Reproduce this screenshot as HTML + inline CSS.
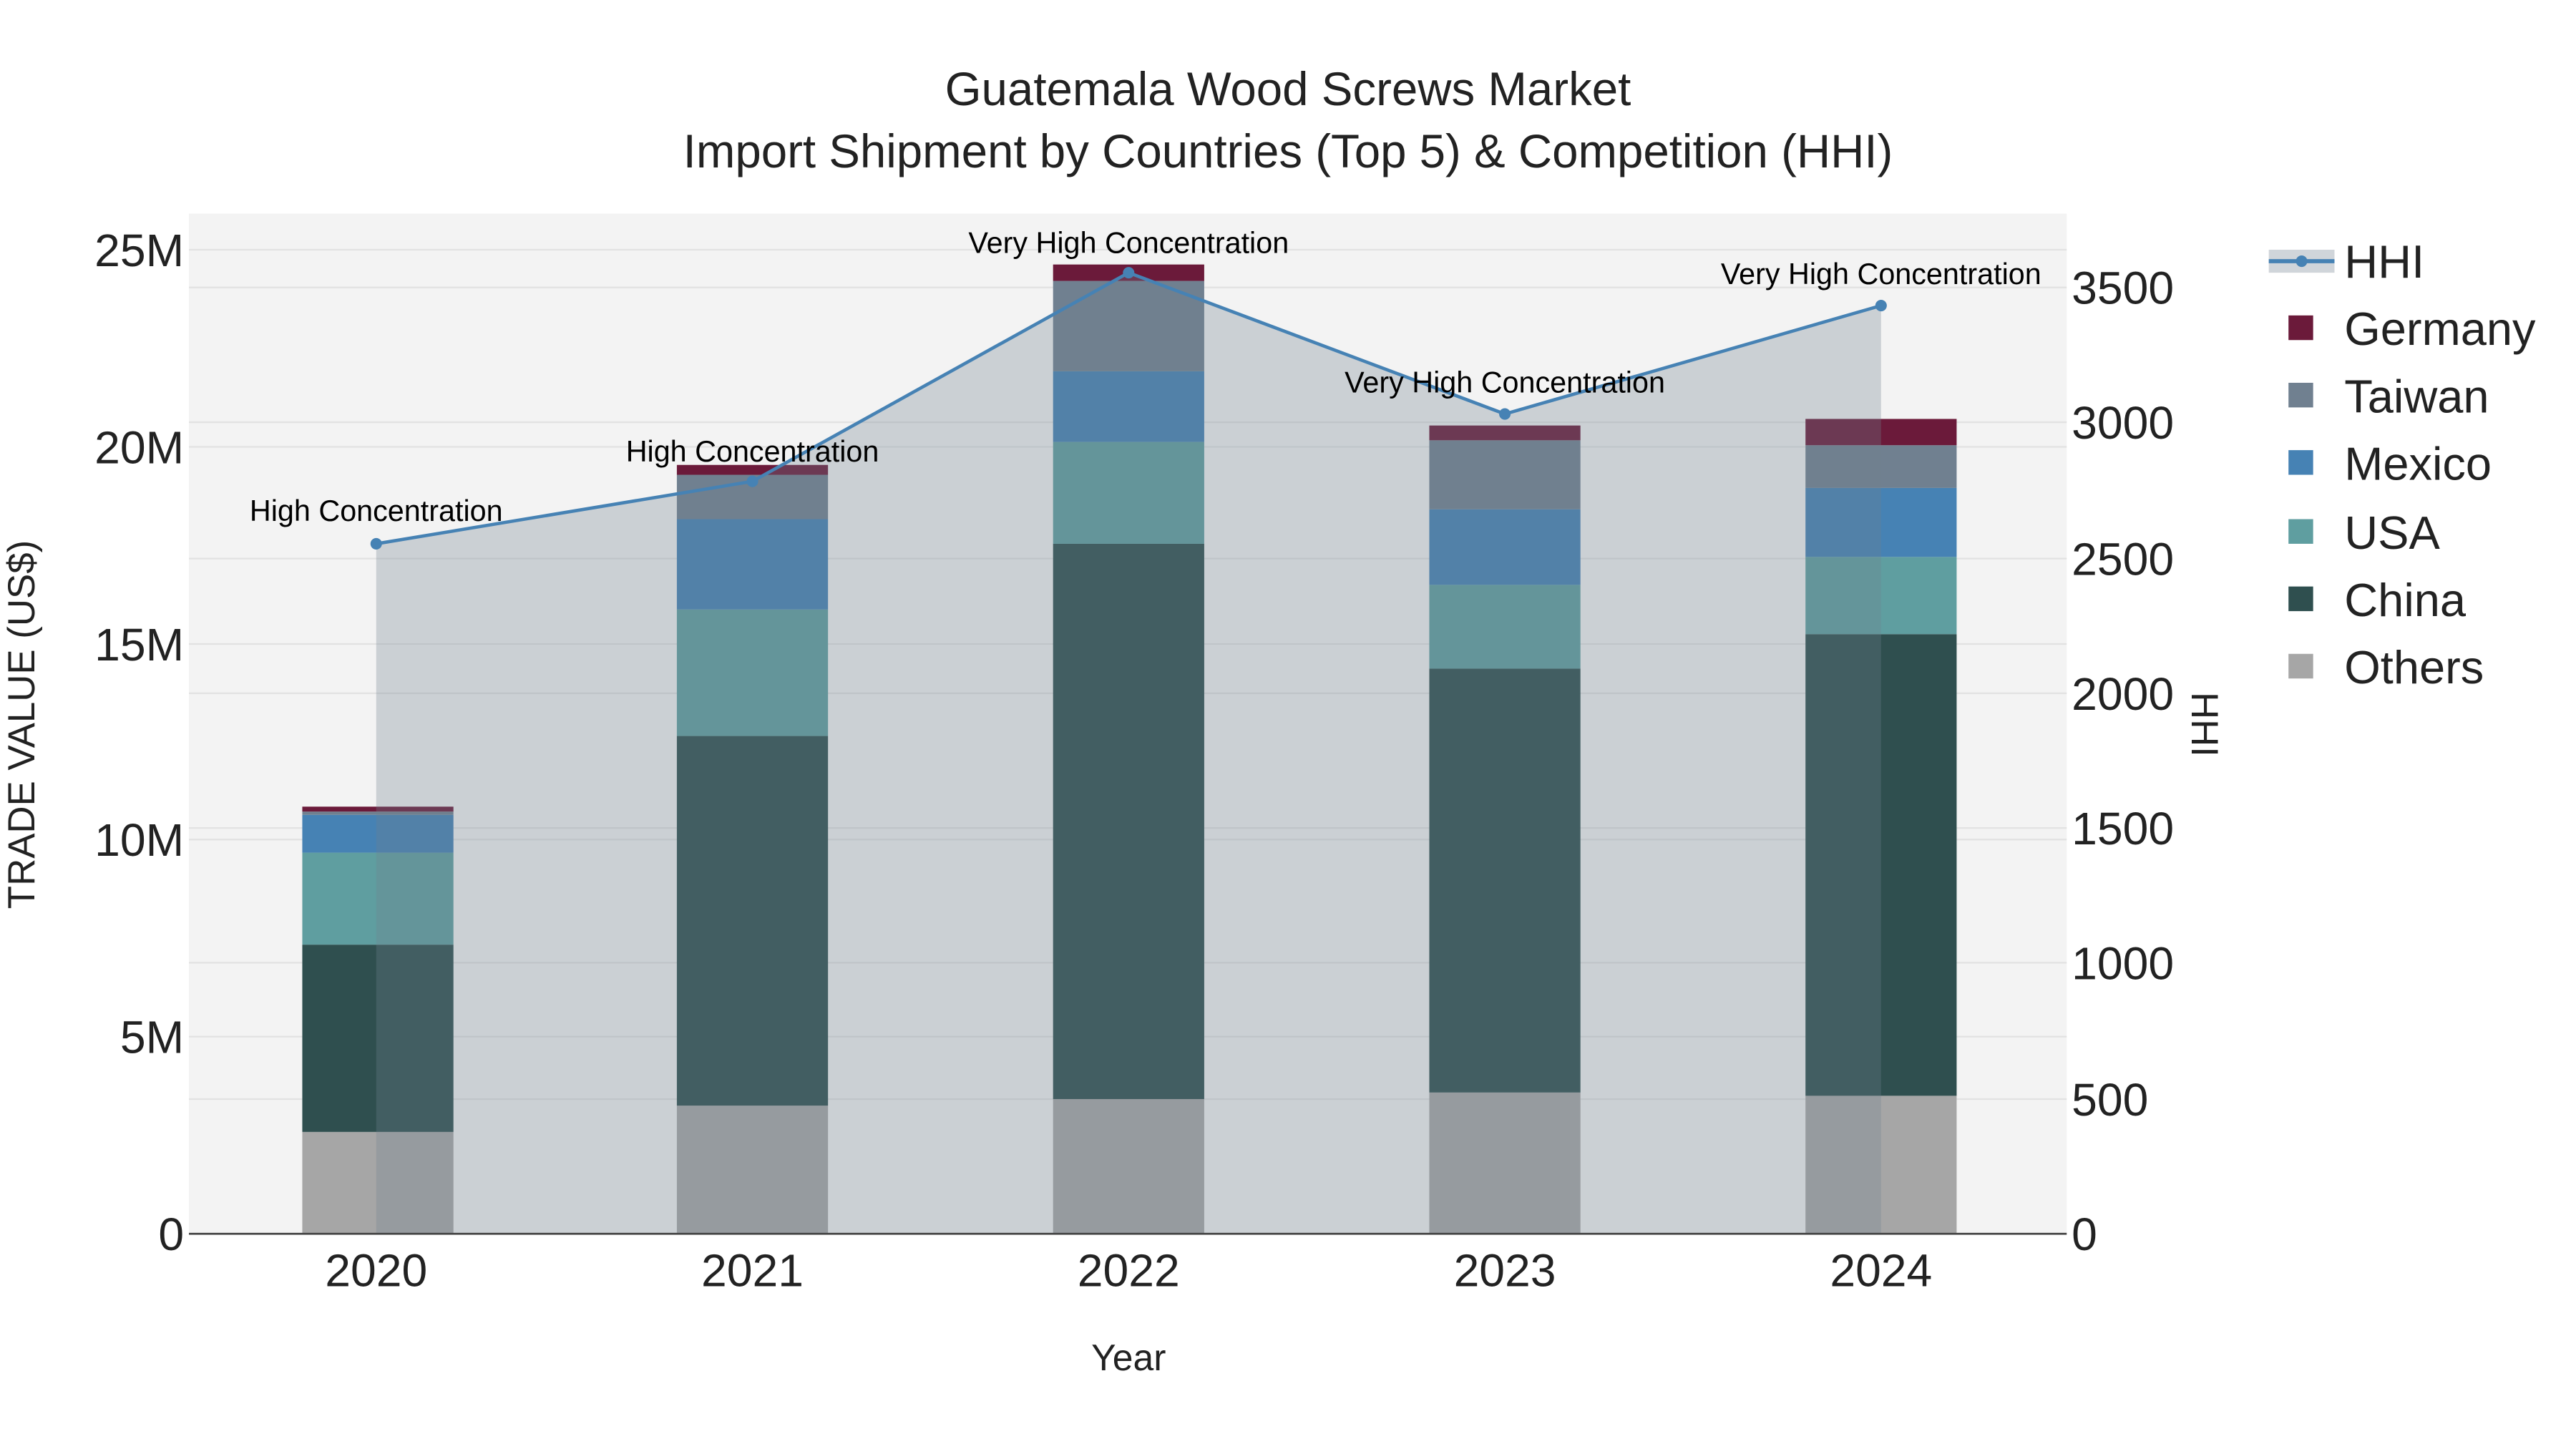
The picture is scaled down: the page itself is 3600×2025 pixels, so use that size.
<!DOCTYPE html>
<html><head><meta charset="utf-8"><style>
html,body{margin:0;padding:0;background:#fff;}
svg{display:block;font-family:"Liberation Sans",Arial,sans-serif;}
</style></head><body>
<svg width="3600" height="2025" viewBox="0 0 1568 882" preserveAspectRatio="none" xmlns="http://www.w3.org/2000/svg">
<rect x="0" y="0" width="1568" height="882" fill="#fff"/>
<rect x="115" y="130" width="1143" height="621" fill="#f3f3f3"/>
<g stroke="#e2e2e2" stroke-width="1">
<line x1="115" x2="1258" y1="631" y2="631"/><line x1="115" x2="1258" y1="511" y2="511"/>
<line x1="115" x2="1258" y1="392" y2="392"/><line x1="115" x2="1258" y1="272" y2="272"/>
<line x1="115" x2="1258" y1="152" y2="152"/>
<line x1="115" x2="1258" y1="669" y2="669"/><line x1="115" x2="1258" y1="586" y2="586"/>
<line x1="115" x2="1258" y1="504" y2="504"/><line x1="115" x2="1258" y1="422" y2="422"/>
<line x1="115" x2="1258" y1="340" y2="340"/><line x1="115" x2="1258" y1="257" y2="257"/>
<line x1="115" x2="1258" y1="175" y2="175"/>
</g>
<g>
<rect x="184" y="689" width="92" height="62" fill="#a6a6a6"/>
<rect x="184" y="575" width="92" height="114" fill="#2f4f4f"/>
<rect x="184" y="519" width="92" height="56" fill="#5f9ea0"/>
<rect x="184" y="496" width="92" height="23" fill="#4682b4"/>
<rect x="184" y="494" width="92" height="2" fill="#708090"/>
<rect x="184" y="491" width="92" height="3" fill="#6b1a3a"/>
<rect x="412" y="673" width="92" height="78" fill="#a6a6a6"/>
<rect x="412" y="448" width="92" height="225" fill="#2f4f4f"/>
<rect x="412" y="371" width="92" height="77" fill="#5f9ea0"/>
<rect x="412" y="316" width="92" height="55" fill="#4682b4"/>
<rect x="412" y="289" width="92" height="27" fill="#708090"/>
<rect x="412" y="283" width="92" height="6" fill="#6b1a3a"/>
<rect x="641" y="669" width="92" height="82" fill="#a6a6a6"/>
<rect x="641" y="331" width="92" height="338" fill="#2f4f4f"/>
<rect x="641" y="269" width="92" height="62" fill="#5f9ea0"/>
<rect x="641" y="226" width="92" height="43" fill="#4682b4"/>
<rect x="641" y="171" width="92" height="55" fill="#708090"/>
<rect x="641" y="161" width="92" height="10" fill="#6b1a3a"/>
<rect x="870" y="665" width="92" height="86" fill="#a6a6a6"/>
<rect x="870" y="407" width="92" height="258" fill="#2f4f4f"/>
<rect x="870" y="356" width="92" height="51" fill="#5f9ea0"/>
<rect x="870" y="310" width="92" height="46" fill="#4682b4"/>
<rect x="870" y="268" width="92" height="42" fill="#708090"/>
<rect x="870" y="259" width="92" height="9" fill="#6b1a3a"/>
<rect x="1099" y="667" width="92" height="84" fill="#a6a6a6"/>
<rect x="1099" y="386" width="92" height="281" fill="#2f4f4f"/>
<rect x="1099" y="339" width="92" height="47" fill="#5f9ea0"/>
<rect x="1099" y="297" width="92" height="42" fill="#4682b4"/>
<rect x="1099" y="271" width="92" height="26" fill="#708090"/>
<rect x="1099" y="255" width="92" height="16" fill="#6b1a3a"/>
</g>
<polygon points="229,751 229,331 458,293 687,166 916,252 1145,186 1145,751" fill="rgba(112,128,144,0.3)"/>
<polyline points="229,331 458,293 687,166 916,252 1145,186" fill="none" stroke="#4682b4" stroke-width="2"/>
<g fill="#4682b4"><circle cx="229" cy="331" r="3.5"/><circle cx="458" cy="293" r="3.5"/><circle cx="687" cy="166" r="3.5"/><circle cx="916" cy="252" r="3.5"/><circle cx="1145" cy="186" r="3.5"/></g>
<line x1="115" x2="1258" y1="751" y2="751" stroke="#444" stroke-width="1.2"/>
<g font-size="18" fill="#000" text-anchor="middle">
<text x="229" y="317">High Concentration</text>
<text x="458" y="281">High Concentration</text>
<text x="687" y="154">Very High Concentration</text>
<text x="916" y="239">Very High Concentration</text>
<text x="1145" y="173">Very High Concentration</text>
</g>
<g font-size="28" fill="#222" text-anchor="end">
<text x="112" y="761">0</text><text x="112" y="641">5M</text><text x="112" y="521">10M</text>
<text x="112" y="402">15M</text><text x="112" y="282">20M</text><text x="112" y="162">25M</text>
</g>
<g font-size="28" fill="#222" text-anchor="start">
<text x="1261" y="761">0</text><text x="1261" y="679">500</text><text x="1261" y="596">1000</text>
<text x="1261" y="514">1500</text><text x="1261" y="432">2000</text><text x="1261" y="350">2500</text>
<text x="1261" y="267">3000</text><text x="1261" y="185">3500</text>
</g>
<g font-size="28" fill="#222" text-anchor="middle">
<text x="229" y="783">2020</text><text x="458" y="783">2021</text><text x="687" y="783">2022</text>
<text x="916" y="783">2023</text><text x="1145" y="783">2024</text>
</g>
<text x="687" y="834" font-size="22.5" fill="#222" text-anchor="middle">Year</text>
<text transform="translate(21,441) rotate(-90)" font-size="23" fill="#222" text-anchor="middle">TRADE VALUE (US$)</text>
<text transform="translate(1334,441) rotate(90)" font-size="23" fill="#222" text-anchor="middle">HHI</text>
<g font-size="28.5" fill="#222" text-anchor="middle">
<text x="784" y="64">Guatemala Wood Screws Market</text>
<text x="784" y="102">Import Shipment by Countries (Top 5) &amp; Competition (HHI)</text>
</g>
<rect x="1381" y="152" width="40" height="14" fill="rgba(112,128,144,0.33)"/>
<line x1="1381" x2="1421" y1="159" y2="159" stroke="#4682b4" stroke-width="2.5"/>
<circle cx="1401" cy="159" r="3.5" fill="#4682b4"/>
<rect x="1393" y="192" width="15" height="15" fill="#6b1a3a"/>
<rect x="1393" y="233" width="15" height="15" fill="#708090"/>
<rect x="1393" y="274" width="15" height="15" fill="#4682b4"/>
<rect x="1393" y="316" width="15" height="15" fill="#5f9ea0"/>
<rect x="1393" y="357" width="15" height="15" fill="#2f4f4f"/>
<rect x="1393" y="398" width="15" height="15" fill="#a6a6a6"/>
<g font-size="28.3" fill="#222">
<text x="1427" y="169">HHI</text><text x="1427" y="210">Germany</text><text x="1427" y="251">Taiwan</text>
<text x="1427" y="292">Mexico</text><text x="1427" y="334">USA</text><text x="1427" y="375">China</text>
<text x="1427" y="416">Others</text>
</g>
</svg>
</body></html>
